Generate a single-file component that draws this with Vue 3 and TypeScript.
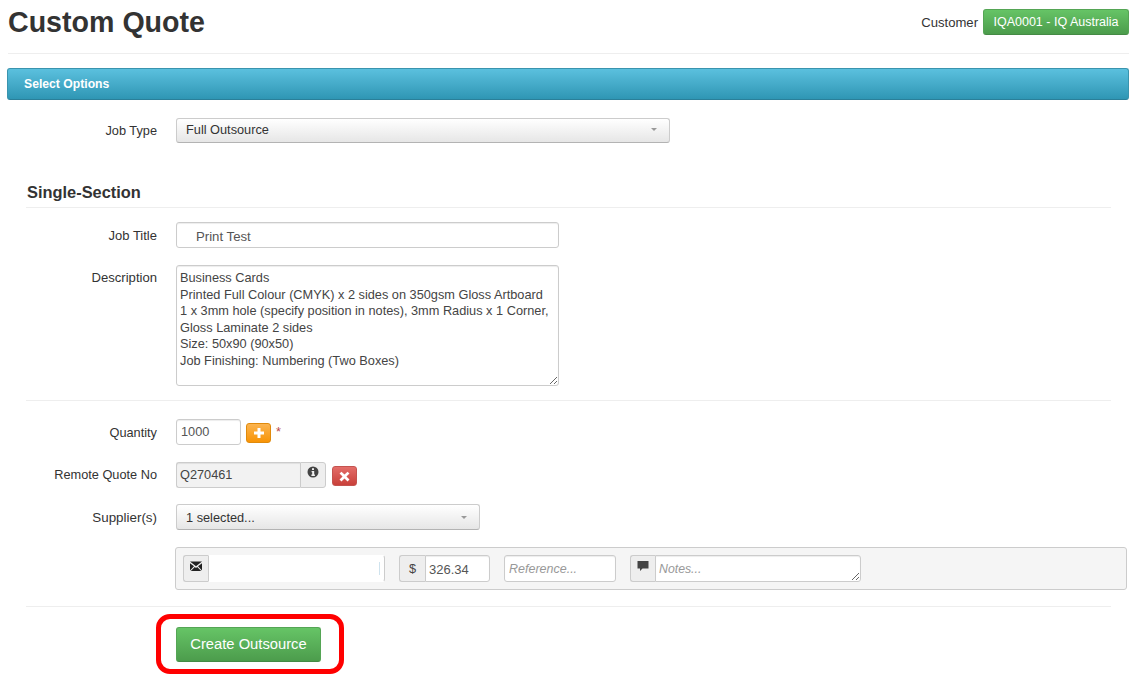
<script setup lang="ts">
const descLines: string[] = [
  'Business Cards',
  'Printed Full Colour (CMYK) x 2 sides on 350gsm Gloss Artboard',
  '1 x 3mm hole (specify position in notes), 3mm Radius x 1 Corner,',
  'Gloss Laminate 2 sides',
  'Size: 50x90 (90x50)',
  'Job Finishing: Numbering (Two Boxes)',
]
</script>

<template>
  <div class="page">
    <header class="head">
      <h1>Custom Quote</h1>
      <div class="customer">
        <span class="cust-label">Customer</span>
        <span class="btn-green small">IQA0001 - IQ Australia</span>
      </div>
    </header>

    <div class="bar">Select Options</div>

    <div class="row job-type">
      <label>Job Type</label>
      <div class="select w-job"><span>Full Outsource</span><i class="caret"></i></div>
    </div>

    <section class="section">
      <h2>Single-Section</h2>

      <div class="row title-row">
        <label>Job Title</label>
        <div class="input w-title indent">Print Test</div>
      </div>

      <div class="row desc-row">
        <label>Description</label>
        <div class="textarea w-title">
          <div v-for="line in descLines" :key="line">{{ line }}</div>
        </div>
      </div>

      <div class="rule r1"></div>

      <div class="row qty-row">
        <label>Quantity</label>
        <div class="input w-qty">1000</div>
        <span class="mini orange">
          <svg viewBox="0 0 12 12" width="12" height="12"><path d="M4.500 1h3v3.500H11v3H7.500V11h-3V7.500H1v-3h3.500z" fill="#fff"/></svg>
        </span>
        <span class="star">*</span>
      </div>

      <div class="row remote-row">
        <label>Remote Quote No</label>
        <div class="group">
          <div class="input w-remote grey">Q270461</div>
          <div class="addon a-info">
            <svg viewBox="0 0 12 12" width="12" height="12"><circle cx="6" cy="6" r="5.500" fill="#444"/><path d="M5 2.300h2v1.600H5zM4.600 5h2.600v3.600h.7V10H4.400V8.600h.8V6.300h-.6z" fill="#f2f2f2"/></svg>
          </div>
        </div>
        <span class="mini red">
          <svg viewBox="0 0 12 12" width="13" height="13"><path d="M3.200 1.500 6 4.200l2.800-2.700 1.800 1.800L7.800 6l2.800 2.700-1.800 1.800L6 7.800l-2.800 2.700-1.800-1.800L4.200 6 1.400 3.300z" fill="#fff"/></svg>
        </span>
      </div>

      <div class="row sup-row">
        <label>Supplier(s)</label>
        <div class="select w-sup"><span>1 selected...</span><i class="caret"></i></div>
      </div>

      <div class="well">
        <div class="group">
          <div class="addon a-left a-narrow">
            <svg viewBox="0 0 14 12" width="14" height="12"><path d="M1 1.500h12L7 6.300z M1 3.200v7.300l4-4.300z M13 3.200v7.300L9 6.200z M1.800 11l4-3.900 1.200.9 1.200-.9 4 3.900z" fill="#222"/></svg>
          </div>
          <div class="input w-email masked"><i class="tick"></i></div>
        </div>
        <div class="group">
          <div class="addon a-left dollar">$</div>
          <div class="input w-price joined">326.34</div>
        </div>
        <div class="input w-ref hint">Reference...</div>
        <div class="group">
          <div class="addon a-left a-narrow">
            <svg viewBox="0 0 14 12" width="14" height="12"><path d="M1.500 1h11v7.500H6.500L4 11V8.500H1.500z" fill="#444"/></svg>
          </div>
          <div class="textarea w-notes hint joined">Notes...</div>
        </div>
      </div>

      <div class="rule r2"></div>

      <div class="submit">
        <div class="ring"><span class="btn-green big">Create Outsource</span></div>
      </div>
    </section>
  </div>
</template>

<style scoped>
.page {
  width: 1136px;
  height: 683px;
  overflow: hidden;
  box-sizing: border-box;
  padding: 0 7px;
  font-family: "Liberation Sans", Arial, sans-serif;
  font-size: 12.750px;
  color: #333;
}
.head {
  height: 53px;
  box-sizing: content-box;
  border-bottom: 1px solid #eee;
  margin: 0 0 14px 1px;
  display: flex;
  justify-content: space-between;
  align-items: flex-start;
}
h1 {
  margin: 4px 0 0;
  font-size: 28.600px;
  line-height: 36px;
  font-weight: 700;
  color: #333;
}
.customer {
  display: flex;
  align-items: center;
  gap: 5px;
  margin-top: 9px;
}
.cust-label { font-size: 13.100px; }
.btn-green {
  display: inline-block;
  color: #fff;
  border-radius: 3px;
  background: linear-gradient(#66c466, #4c9c4c);
  border: 1px solid #55a555;
  border-bottom-color: #458a45;
  box-sizing: border-box;
  text-align: center;
}
.small {
  width: 146px;
  height: 26px;
  line-height: 24px;
  font-size: 12.500px;
}
.big {
  width: 145px;
  height: 35px;
  line-height: 33px;
  font-size: 14.750px;
}
.bar {
  height: 32px;
  box-sizing: border-box;
  width: 1122px;
  padding-left: 16px;
  line-height: 30px;
  color: #fff;
  font-size: 12.200px;
  font-weight: 700;
  border-radius: 3px;
  background: linear-gradient(#5bc0de, #2f96b4);
  border: 1px solid #3a94ae;
  border-bottom-color: #2a7f99;
}
.row {
  display: flex;
  align-items: flex-start;
}
.row label {
  flex: none;
  width: 150px;
  text-align: right;
  margin-right: 19px;
}
.job-type {
  margin-top: 18px;
  height: 26px;
}
.job-type label { line-height: 26px; }
.select {
  display: flex;
  align-items: center;
  justify-content: space-between;
  box-sizing: border-box;
  height: 26px;
  padding: 0 10px 0 9px;
  border: 1px solid #ccc;
  border-bottom-color: #b3b3b3;
  border-radius: 3px;
  background: linear-gradient(#fff, #e6e6e6);
  color: #333;
}
.caret {
  width: 0;
  height: 0;
  border: 3px solid transparent;
  border-top: 3px solid #999;
  border-bottom: 0;
  margin-right: 2px;
}
.w-job {
  width: 494px;
  height: 25px;
  padding-bottom: 2px;
}
.w-sup { width: 304px; }
.section {
  padding-left: 19px;
  width: 1103px;
  box-sizing: border-box;
}
.section .row label { width: 131px; }
h2 {
  margin: 38px 0 0;
  height: 25px;
  width: 1084px;
  font-size: 16.400px;
  line-height: 21px;
  font-weight: 700;
  color: #333;
  border-bottom: 1px solid #eee;
  box-sizing: content-box;
  padding-left: 1px;
}
.input, .textarea {
  box-sizing: border-box;
  border: 1px solid #ccc;
  border-radius: 3px;
  background: #fff;
  color: #555;
  padding: 0 3px 0 4px;
}
.input {
  height: 26px;
  line-height: 24px;
  box-shadow: inset 0 1px 1px rgba(0, 0, 0, .075);
}
.textarea {
  line-height: 16.600px;
  box-shadow: inset 0 1px 1px rgba(0, 0, 0, .075);
  overflow: hidden;
  resize: both;
}
.indent { padding-left: 19px; padding-top: 2px; font-size: 13.200px; }
.title-row { margin-top: 14px; height: 26px; }
.title-row label { line-height: 27px; font-size: 13px; }
.desc-row { margin-top: 17px; }
.desc-row label { line-height: 26px; font-size: 13.100px; }
.w-title { width: 383px; }
.desc-row .textarea {
  height: 121px;
  padding: 4px 0 0 3px;
  color: #444;
  white-space: nowrap;
}
.rule {
  border-top: 1px solid #eee;
  width: 1085px;
}
.r1 { margin-top: 14px; }
.qty-row { margin-top: 18px; height: 26px; }
.qty-row label { line-height: 27px; }
.w-qty { width: 65px; }
.mini {
  flex: none;
  width: 25px;
  height: 20px;
  margin: 4px 0 0 5px;
  box-sizing: border-box;
  border-radius: 3px;
  display: flex;
  align-items: center;
  justify-content: center;
}
.orange {
  background: linear-gradient(#fbb450, #f89406);
  border: 1px solid #e08a0c;
}
.red {
  margin-left: 6px;
  background: linear-gradient(#e46d69, #c9403a);
  border: 1px solid #c4534f;
}
.star {
  color: #b94a48;
  margin: 4px 0 0 5px;
  line-height: 18px;
}
.remote-row { margin-top: 17px; height: 26px; }
.remote-row label { line-height: 26px; }
.group { display: flex; }
.w-remote { width: 124px; }
.grey {
  background: #f2f2f2;
  border-radius: 3px 0 0 3px;
  border-right: 0;
  padding-left: 3px;
  color: #444;
}
.addon {
  box-sizing: border-box;
  height: 26px;
  background: #eee;
  border: 1px solid #ccc;
  display: flex;
  justify-content: center;
  flex: none;
}
.a-info {
  width: 26px;
  border-radius: 0 3px 3px 0;
  padding-top: 3px;
}
.sup-row { margin-top: 16px; height: 26px; }
.sup-row label { line-height: 27px; font-size: 13.400px; }
.well {
  margin: 17px 0 0 149px;
  width: 952px;
  height: 43px;
  box-sizing: border-box;
  background: #f5f5f5;
  border: 1px solid #ccc;
  border-radius: 3px;
  padding: 7px;
  display: flex;
  gap: 14px;
}
.a-left {
  width: 26px;
  height: 27px;
  border-radius: 3px 0 0 3px;
  border-right: 0;
  padding-top: 4px;
}
.a-narrow { width: 25px; }
.a-left svg { display: block; margin-left: -1px; }
.dollar {
  color: #444;
  padding-top: 0;
  line-height: 26px;
}
.well .input, .well .textarea { height: 27px; line-height: 25px; }
.well .input { padding-top: 1px; }
.well .w-price { font-size: 13px; padding-left: 3px; }
.joined { border-radius: 0 3px 3px 0; }
.w-email {
  width: 177px;
  border-radius: 0 3px 3px 0;
  position: relative;
  border-top-color: #fff;
  border-bottom-color: #fff;
  box-shadow: none;
}
.tick {
  position: absolute;
  right: 4px;
  top: 6px;
  height: 13px;
  width: 1px;
  background: #cfe3ee;
}
.w-price { width: 65px; }
.w-ref { width: 112px; font-size: 12.500px; }
.w-notes {
  width: 206px;
  padding-left: 3px;
  font-size: 12.300px;
  padding-top: 1px;
}
.hint {
  font-style: italic;
  color: #999;
}
.r2 { margin-top: 16px; }
.submit {
  margin: 7px 0 0 130px;
}
.ring {
  display: inline-flex;
  box-sizing: border-box;
  width: 188px;
  height: 60px;
  border: 5px solid #f00;
  border-radius: 14px;
  align-items: center;
  justify-content: flex-start;
  padding-left: 15px;
}
</style>

<style>
html, body { margin: 0; background: #fff; }
</style>
